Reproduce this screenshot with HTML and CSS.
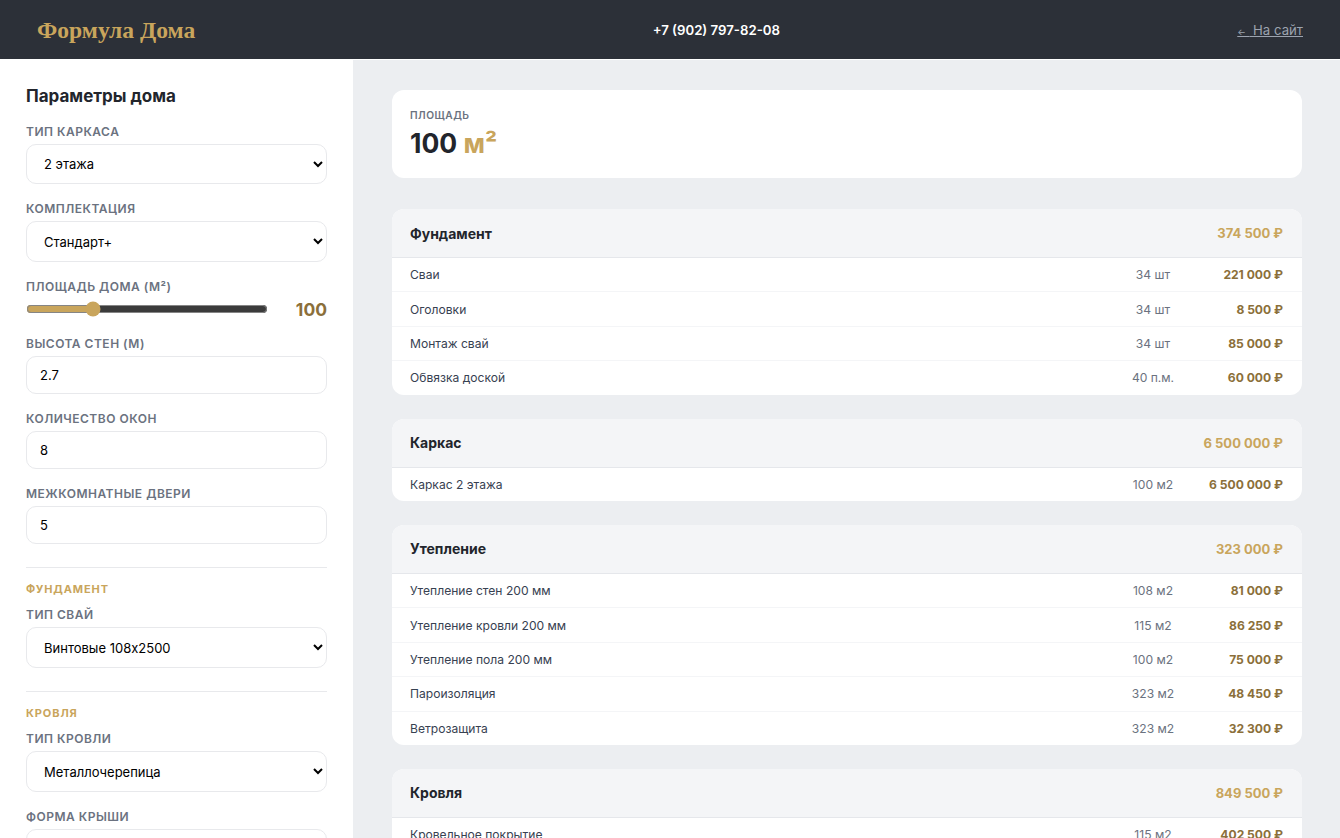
FILE: index.html
```html
<!DOCTYPE html>
<html lang="ru">

<head>
  <title>Формула Дома</title>
  <meta charset="UTF-8">
  <meta name="viewport" content="width=device-width, initial-scale=1.0">
  <link rel="stylesheet" href="styles.css">
</head>

<body>
  <header class="topbar">
    <div class="logo">Формула Дома</div>
    <div class="phone">+7 (902) 797-82-08</div>
    <a class="back-link" href="#"><span class="back-arrow">←</span> На сайт</a>
  </header>

  <div class="layout">
    <aside class="sidebar">
      <h2 class="sidebar-title">Параметры дома</h2>

      <div class="field">
        <label class="field-label">Тип каркаса</label>
        <select class="control control-select"><option>2 этажа</option></select>
      </div>
      <div class="field">
        <label class="field-label">Комплектация</label>
        <select class="control control-select"><option>Стандарт+</option></select>
      </div>
      <div class="field">
        <label class="field-label">Площадь дома (м²)</label>
        <div class="range-row">
          <input class="range" type="range" min="30" max="300" value="100">
          <span class="range-value">100</span>
        </div>
      </div>
      <div class="field">
        <label class="field-label">Высота стен (м)</label>
        <input class="control" type="text" value="2.7">
      </div>
      <div class="field">
        <label class="field-label">Количество окон</label>
        <input class="control" type="text" value="8">
      </div>
      <div class="field">
        <label class="field-label">Межкомнатные двери</label>
        <input class="control" type="text" value="5">
      </div>

      <div class="group">
        <div class="group-title">Фундамент</div>
        <div class="field">
          <label class="field-label">Тип свай</label>
          <select class="control control-select"><option>Винтовые 108х2500</option></select>
        </div>
      </div>

      <div class="group">
        <div class="group-title">Кровля</div>
        <div class="field">
          <label class="field-label">Тип кровли</label>
          <select class="control control-select"><option>Металлочерепица</option></select>
        </div>
        <div class="field">
          <label class="field-label">Форма крыши</label>
          <select class="control control-select"><option>Двускатная</option></select>
        </div>
      </div>
    </aside>

    <main class="content">
      <section class="area-card">
        <div class="area-label">Площадь</div>
        <div class="area-value">100 <span class="area-unit">м²</span></div>
      </section>

      <section class="card">
        <div class="card-head"><span class="card-title">Фундамент</span><span class="card-sum">374 500 ₽</span></div>
        <div class="row"><span class="row-name">Сваи</span><span class="row-qty">34 шт</span><span class="row-price">221 000 ₽</span></div>
        <div class="row"><span class="row-name">Оголовки</span><span class="row-qty">34 шт</span><span class="row-price">8 500 ₽</span></div>
        <div class="row"><span class="row-name">Монтаж свай</span><span class="row-qty">34 шт</span><span class="row-price">85 000 ₽</span></div>
        <div class="row"><span class="row-name">Обвязка доской</span><span class="row-qty">40 п.м.</span><span class="row-price">60 000 ₽</span></div>
      </section>

      <section class="card">
        <div class="card-head"><span class="card-title">Каркас</span><span class="card-sum">6 500 000 ₽</span></div>
        <div class="row"><span class="row-name">Каркас 2 этажа</span><span class="row-qty">100 м2</span><span class="row-price">6 500 000 ₽</span></div>
      </section>

      <section class="card">
        <div class="card-head"><span class="card-title">Утепление</span><span class="card-sum">323 000 ₽</span></div>
        <div class="row"><span class="row-name">Утепление стен 200 мм</span><span class="row-qty">108 м2</span><span class="row-price">81 000 ₽</span></div>
        <div class="row"><span class="row-name">Утепление кровли 200 мм</span><span class="row-qty">115 м2</span><span class="row-price">86 250 ₽</span></div>
        <div class="row"><span class="row-name">Утепление пола 200 мм</span><span class="row-qty">100 м2</span><span class="row-price">75 000 ₽</span></div>
        <div class="row"><span class="row-name">Пароизоляция</span><span class="row-qty">323 м2</span><span class="row-price">48 450 ₽</span></div>
        <div class="row"><span class="row-name">Ветрозащита</span><span class="row-qty">323 м2</span><span class="row-price">32 300 ₽</span></div>
      </section>

      <section class="card">
        <div class="card-head"><span class="card-title">Кровля</span><span class="card-sum">849 500 ₽</span></div>
        <div class="row"><span class="row-name">Кровельное покрытие</span><span class="row-qty">115 м2</span><span class="row-price">402 500 ₽</span></div>
      </section>
    </main>
  </div>
</body>

</html>
```

FILE: styles.css
```css
* {
  box-sizing: border-box;
}

html,
body {
  height: 100%;
}

body {
  display: flex;
  flex-direction: column;
  margin: 0;
  overflow: hidden;
  background-color: #eceef1;
  color: #22252c;
  font-family: Inter, "Liberation Sans", sans-serif;
}

.topbar {
  display: flex;
  flex: none;
  align-items: center;
  justify-content: space-between;
  height: 60px;
  padding: 1px 37px 0;
  border-bottom: 1px solid #fff;
  background-color: #2c3038;
}

.logo {
  padding-top: 1px;
  color: #c9a55c;
  font-family: "Liberation Serif", serif;
  font-size: 23.6px;
  font-weight: bold;
}

.phone {
  color: #fff;
  font-size: 13.2px;
  font-weight: 600;
}

.back-link {
  color: #9ca3af;
  font-size: 13.2px;
}

.back-arrow {
  font-size: 9px;
  letter-spacing: 3.5px;
}

.layout {
  display: flex;
  flex: 1;
  min-height: 0;
}

.sidebar {
  flex: none;
  width: 353px;
  padding: 25px 26px;
  overflow: hidden;
  background-color: #fff;
}

.sidebar-title {
  margin: 0 0 16.5px;
  color: #22252c;
  font-size: 17px;
  font-weight: 700;
  line-height: 22px;
}

.field {
  margin-bottom: 17px;
}

.field-label {
  display: block;
  margin-bottom: 5px;
  color: #6b7280;
  font-size: 12px;
  font-weight: 600;
  letter-spacing: 0.5px;
  line-height: 15px;
  text-transform: uppercase;
}

.control {
  display: block;
  width: 100%;
  height: 38px;
  padding: 0 13px;
  border: 1px solid #e8e9ec;
  border-radius: 10px;
  background-color: #fff;
  color: #000;
  font-family: inherit;
  font-size: 13px;
}

.control-select {
  height: 40.9px;
}

.range-row {
  display: flex;
  align-items: center;
  justify-content: space-between;
  height: 20px;
}

.range {
  width: 242px;
  margin: 0;
  accent-color: #c9a55c;
}

.range-value {
  color: #8b6f3a;
  font-size: 17.5px;
  font-weight: 700;
}

.group {
  padding-top: 14px;
  border-top: 1px solid #e8e9ec;
  margin-top: 22.5px;
}

.group-title {
  margin-bottom: 11.5px;
  color: #c9a55c;
  font-size: 11px;
  font-weight: 700;
  letter-spacing: 0.9px;
  text-transform: uppercase;
}

.content {
  flex: 1;
  min-width: 0;
  padding: 30px 38px 30px 39px;
  overflow: hidden;
}

.area-card {
  height: 88px;
  padding: 18px;
  margin-bottom: 31px;
  border-radius: 12px;
  background-color: #fff;
}

.area-label {
  margin-bottom: 4px;
  color: #6b7280;
  font-size: 10.2px;
  font-weight: 600;
  letter-spacing: 0.5px;
  line-height: 14px;
  text-transform: uppercase;
}

.area-value {
  color: #22252c;
  font-size: 26.5px;
  font-weight: 700;
  line-height: 34px;
}

.area-unit {
  color: #c9a55c;
}

.card {
  margin-bottom: 24px;
  overflow: hidden;
  border-radius: 12px;
  background-color: #fff;
}

.card-head {
  display: flex;
  align-items: center;
  justify-content: space-between;
  height: 49px;
  padding: 0 19px 0 18px;
  border-bottom: 1px solid #e5e7eb;
  background-color: #f4f5f7;
}

.card-title {
  color: #22252c;
  font-size: 14px;
  font-weight: 700;
}

.card-sum {
  color: #c9a55c;
  font-size: 13px;
  font-weight: 700;
}

.row {
  display: grid;
  grid-template-columns: 1fr 100px 80px;
  align-items: center;
  height: 34.4px;
  padding: 0 19px 0 18px;
  border-bottom: 1px solid #f4f5f7;
  font-size: 12.1px;
}

.row:last-child {
  height: 33.4px;
  border-bottom: none;
}

.row-name {
  color: #374151;
}

.row-qty {
  color: #6b7280;
  text-align: center;
}

.row-price {
  color: #8b6f3a;
  font-weight: 700;
  text-align: right;
  white-space: nowrap;
}
```
